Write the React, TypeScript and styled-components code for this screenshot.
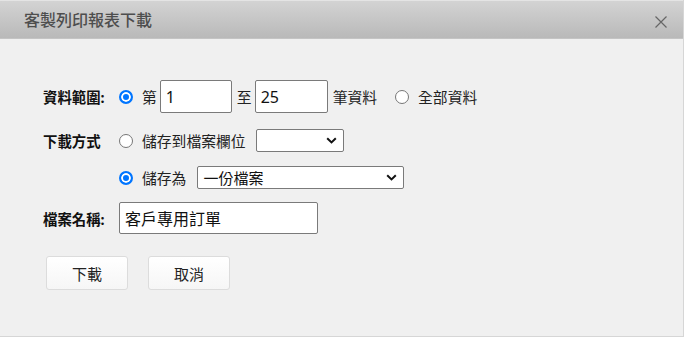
import styled, { createGlobalStyle } from "styled-components";

const GlobalStyle = createGlobalStyle`
    html, body {
        margin: 0;
        padding: 0;
        background: #ffffff;
    }
    body {
        font-family: "Noto Sans", "Noto Sans CJK TC", sans-serif;
        color: #222;
    }
`;

const CJK = `"Noto Sans", "Noto Sans CJK TC", sans-serif`;

function Chevron() {
    return (
        <svg width="11" height="7" viewBox="0 0 11 7">
            <path d="M1.2 1.2 L5.5 5.4 L9.8 1.2" fill="none" stroke="#111" strokeWidth="2" />
        </svg>
    );
}

function CloseIcon() {
    return (
        <svg width="12" height="12" viewBox="0 0 12 12">
            <path d="M0.5 0.5 L11.5 11.5 M11.5 0.5 L0.5 11.5" stroke="#666" strokeWidth="1.2" />
        </svg>
    );
}

export default function App() {
    return (
        <Page>
            <GlobalStyle />
            <Dialog>
                <TitleBar>
                    <Title>客製列印報表下載</Title>
                    <CloseBtn aria-label="close">
                        <CloseIcon />
                    </CloseBtn>
                </TitleBar>
                <Body>
                    <Row $h={33} $mt={0}>
                        <Label>資料範圍:</Label>
                        <Choice>
                            <Radio type="radio" name="range" defaultChecked />
                            <span>第</span>
                        </Choice>
                        <TextBox $w={72} $h={33} $ml={3} defaultValue="1" />
                        <Word $ml={5}>至</Word>
                        <TextBox $w={73} $h={33} $ml={3} defaultValue="25" />
                        <Word $ml={5}>筆資料</Word>
                        <Choice $ml={18}>
                            <Radio type="radio" name="range" />
                            <span>全部資料</span>
                        </Choice>
                    </Row>
                    <Row $h={23} $mt={16}>
                        <Label>下載方式</Label>
                        <Choice>
                            <Radio type="radio" name="mode" />
                            <span>儲存到檔案欄位</span>
                        </Choice>
                        <SelectBox $w={88} $ml={10}>
                            <Select defaultValue="">
                                <option value=""></option>
                            </Select>
                            <Arrow>
                                <Chevron />
                            </Arrow>
                        </SelectBox>
                    </Row>
                    <Row $h={23} $mt={14}>
                        <Label />
                        <Choice>
                            <Radio type="radio" name="mode" defaultChecked />
                            <span>儲存為</span>
                        </Choice>
                        <SelectBox $w={207} $ml={11}>
                            <Select defaultValue="one">
                                <option value="one">一份檔案</option>
                            </Select>
                            <Arrow>
                                <Chevron />
                            </Arrow>
                        </SelectBox>
                    </Row>
                    <Row $h={32} $mt={13}>
                        <Label>檔案名稱:</Label>
                        <TextBox $w={199} $h={32} $ml={0} defaultValue="客戶專用訂單" />
                    </Row>
                    <Buttons>
                        <Button>下載</Button>
                        <Button>取消</Button>
                    </Buttons>
                </Body>
            </Dialog>
        </Page>
    );
}

const Page = styled.div`
    width: 686px;
    height: 339px;
    overflow: hidden;
    background: #ffffff;
`;

const Dialog = styled.div`
    width: 684px;
    height: 337px;
    box-sizing: border-box;
    border-right: 1px solid #d6d6d6;
    border-bottom: 1px solid #d6d6d6;
    background: #f0f0f0;
    display: flex;
    flex-direction: column;
`;

const TitleBar = styled.div`
    height: 39px;
    box-sizing: border-box;
    flex-shrink: 0;
    border-top: 1px solid #e4e4e4;
    border-bottom: 1px solid #c4c4c4;
    background: linear-gradient(#d3d3d3, #b9b9b9);
    display: flex;
    align-items: center;
    justify-content: space-between;
    padding: 0 16px 0 24px;
`;

const Title = styled.h1`
    margin: 0 0 2px;
    font-family: ${CJK};
    font-size: 16px;
    font-weight: 500;
    color: #4e4e4e;
`;

const CloseBtn = styled.button`
    border: 0;
    background: none;
    padding: 0;
    margin-top: 5px;
    display: flex;
    cursor: pointer;
`;

const Body = styled.div`
    flex: 1;
    padding: 41px 0 0 43px;
    display: flex;
    flex-direction: column;
`;

const Row = styled.div<{ $h: number; $mt: number }>`
    display: flex;
    align-items: center;
    height: ${(p) => p.$h}px;
    margin-top: ${(p) => p.$mt}px;
    font-family: ${CJK};
    font-size: 14.8px;
`;

const Label = styled.label`
    width: 76px;
    flex-shrink: 0;
    font-weight: 700;
    font-size: 14.4px;
    color: #111;
`;

const Choice = styled.label<{ $ml?: number }>`
    display: flex;
    align-items: center;
    gap: 9px;
    margin-left: ${(p) => p.$ml ?? 0}px;
    color: #222;
`;

const Radio = styled.input`
    appearance: none;
    width: 14px;
    height: 14px;
    margin: 0;
    box-sizing: border-box;
    border-radius: 50%;
    border: 1px solid #767676;
    background: #fff;
    &:checked {
        border: 2px solid #0075ff;
        background: #0075ff;
        box-shadow: inset 0 0 0 2px #fff;
    }
`;

const Word = styled.span<{ $ml: number }>`
    margin-left: ${(p) => p.$ml}px;
`;

const TextBox = styled.input<{ $w: number; $h: number; $ml: number }>`
    width: ${(p) => p.$w}px;
    height: ${(p) => p.$h}px;
    margin-left: ${(p) => p.$ml}px;
    box-sizing: border-box;
    border: 1px solid #7a7a7a;
    border-radius: 2px;
    background: #fff;
    padding: 0 5px;
    font-family: ${CJK};
    font-size: 16px;
    color: #111;
    outline: none;
`;

const SelectBox = styled.div<{ $w: number; $ml: number }>`
    position: relative;
    width: ${(p) => p.$w}px;
    height: 23px;
    margin-left: ${(p) => p.$ml}px;
`;

const Select = styled.select`
    appearance: none;
    width: 100%;
    height: 100%;
    box-sizing: border-box;
    border: 1px solid #7a7a7a;
    border-radius: 2px;
    background: #fff;
    padding: 0 24px 0 5px;
    font-family: ${CJK};
    font-size: 15px;
    color: #111;
    outline: none;
`;

const Arrow = styled.span`
    position: absolute;
    right: 7px;
    top: 8px;
    display: flex;
    pointer-events: none;
`;

const Buttons = styled.div`
    display: flex;
    gap: 20px;
    margin: 22px 0 0 3px;
`;

const Button = styled.button`
    width: 82px;
    height: 34px;
    border: 1px solid #dcdcdc;
    border-radius: 3px;
    background: linear-gradient(#ffffff, #f6f6f6);
    font-family: ${CJK};
    font-size: 15px;
    color: #222;
    cursor: pointer;
`;
